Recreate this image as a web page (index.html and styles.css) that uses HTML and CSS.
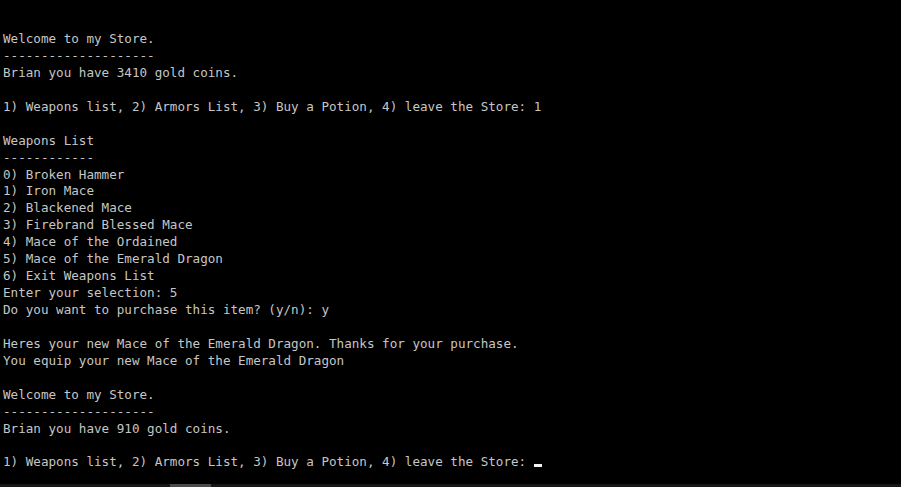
FILE: index.html
```html
<!DOCTYPE html>
<html>
<head>
<meta charset="utf-8">
<link rel="stylesheet" href="styles.css">
</head>
<body>
<div class="console">
<pre class="output">Welcome to my Store.
--------------------
Brian you have 3410 gold coins.

1) Weapons list, 2) Armors List, 3) Buy a Potion, 4) leave the Store: 1

Weapons List
------------
0) Broken Hammer
1) Iron Mace
2) Blackened Mace
3) Firebrand Blessed Mace
4) Mace of the Ordained
5) Mace of the Emerald Dragon
6) Exit Weapons List
Enter your selection: 5
Do you want to purchase this item? (y/n): y

Heres your new Mace of the Emerald Dragon. Thanks for your purchase.
You equip your new Mace of the Emerald Dragon

Welcome to my Store.
--------------------
Brian you have 910 gold coins.

1) Weapons list, 2) Armors List, 3) Buy a Potion, 4) leave the Store: <span class="cursor"> </span></pre>
<div class="hscroll"><div class="thumb"></div></div>
</div>
</body>
</html>
```
FILE: styles.css
```css
html, body {
  margin: 0;
  padding: 0;
  background: #000;
  overflow: hidden;
}
.console {
  width: 901px;
  height: 487px;
  display: flex;
  flex-direction: column;
  background: #000;
}
.output {
  flex: 1;
  margin: 0;
  padding: 31px 0 0 3px;
  font-family: "DejaVu Sans Mono", "Liberation Mono", monospace;
  font-size: 12.6px;
  line-height: 16.94px;
  color: #c6c6c6;
  white-space: pre;
  overflow: hidden;
}
.cursor {
  display: inline-block;
  width: 8px;
  height: 16.94px;
  vertical-align: top;
  background: linear-gradient(to bottom, transparent 0 10px, #f2f2f2 10px 13px, transparent 13px);
}
.hscroll {
  height: 3px;
  background: #161616;
  display: flex;
  padding-left: 170px;
}
.thumb {
  width: 41px;
  background: #4a4a4a;
}
```
